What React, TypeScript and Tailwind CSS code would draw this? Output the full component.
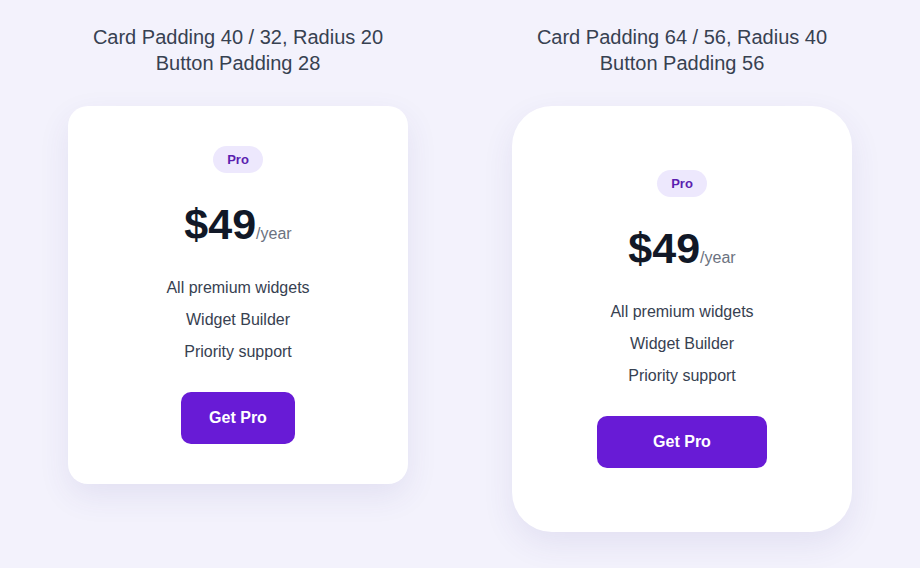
import React from 'react';

type Variant = {
  title: string[];
  cardClass: string;
  buttonClass: string;
};

const VARIANTS: Variant[] = [
  {
    title: ['Card Padding 40 / 32, Radius 20', 'Button Padding 28'],
    cardClass: 'px-8 py-10 rounded-[20px]',
    buttonClass: 'px-7',
  },
  {
    title: ['Card Padding 64 / 56, Radius 40', 'Button Padding 56'],
    cardClass: 'px-14 py-16 rounded-[40px]',
    buttonClass: 'px-14',
  },
];

const FEATURES = ['All premium widgets', 'Widget Builder', 'Priority support'];

function PricingCard({ variant }: { variant: Variant }) {
  return (
    <div className="flex w-[340px] flex-col items-center">
      <h2 className="text-center text-[20px] leading-[26px] text-[#374151]">
        {variant.title.map((line) => (
          <div key={line}>{line}</div>
        ))}
      </h2>

      <div
        className={`mt-[30px] flex w-full flex-col items-center bg-white shadow-[0_12px_32px_rgba(70,60,140,0.09)] ${variant.cardClass}`}
      >
        <span className="rounded-full bg-[#ede8fd] px-[14px] py-[5px] text-[13px] font-bold leading-[17px] text-[#5b1fb0]">
          Pro
        </span>

        <div className="mt-[30px] flex items-baseline">
          <span className="text-[43px] font-bold leading-none text-[#111827]">$49</span>
          <span className="text-[16px] leading-6 text-[#6b7280]">/year</span>
        </div>

        <ul className="mt-[30px] flex flex-col items-center gap-2">
          {FEATURES.map((f) => (
            <li key={f} className="text-[16px] leading-6 text-[#374151]">
              {f}
            </li>
          ))}
        </ul>

        <button
          type="button"
          className={`mt-[28px] rounded-[10px] bg-[#681bd6] py-[14px] text-[16px] font-bold leading-6 text-white ${variant.buttonClass}`}
        >
          Get Pro
        </button>
      </div>
    </div>
  );
}

export default function App() {
  return (
    <div
      className="min-h-[568px] w-full bg-[#f3f2fc] pt-[24px]"
      style={{ fontFamily: '"Liberation Sans", Arial, sans-serif' }}
    >
      <div className="flex items-start justify-center gap-[104px]">
        {VARIANTS.map((v) => (
          <PricingCard key={v.title[0]} variant={v} />
        ))}
      </div>
    </div>
  );
}
